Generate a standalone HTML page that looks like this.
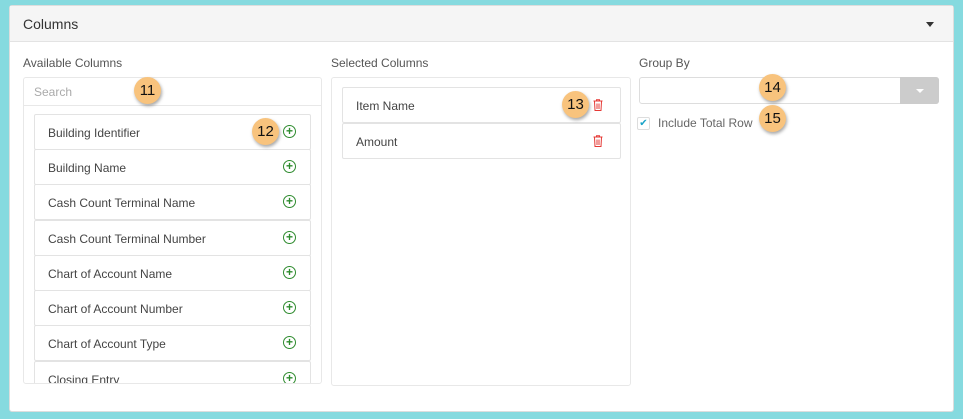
<!DOCTYPE html>
<html><head><style>
*{box-sizing:border-box;margin:0;padding:0}
body{width:963px;height:419px;background:#86dadf;font-family:"Liberation Sans",sans-serif;color:#444;position:relative;overflow:hidden}
.panel{position:absolute;left:9px;top:5px;width:945px;height:407px;background:#fff;border:1px solid #ddd;border-radius:3px}
.hdr{position:absolute;left:0;top:0;right:0;height:36px;background:#f5f5f5;border-bottom:1px solid #e3e3e3}
.hdr span{position:absolute;left:13px;top:10px;font-size:14px;color:#333}
.caret{position:absolute;right:19px;top:16px;border-left:4px solid transparent;border-right:4px solid transparent;border-top:5px solid #333}
.abs{position:absolute}
.lbl{font-size:12px;color:#555}
.box{border:1px solid #e8e8e8;border-radius:3px;background:#fff;overflow:hidden}
.item{position:absolute;left:10px;width:277px;height:36px;border:1px solid #e3e3e3;border-radius:2px;font-size:12px;color:#444;padding:11px 0 0 13px;background:#fff}
.plus{position:absolute;right:14px;top:10px;width:13px;height:13px;border:1px solid #2e8b2e;border-radius:50%;color:#2e8b2e;font-size:12px;line-height:10px;text-align:center;font-weight:bold}
.badge{position:absolute;width:27px;height:27px;border-radius:50%;background:#f8c37d;box-shadow:1px 2px 3px rgba(0,0,0,.35);font-size:15px;color:#111;text-align:center;line-height:27px}
.trash{position:absolute;right:17px;top:11px;width:10px;height:12px}
</style></head><body>
<div class="panel">
<div class="hdr"><span>Columns</span><div class="caret"></div></div>
</div>
<div class="abs lbl" style="left:23px;top:56px">Available Columns</div>
<div class="abs box" style="left:23px;top:77px;width:299px;height:307px">
 <div style="height:28px;border-bottom:1px solid #e8e8e8;font-size:12px;color:#aaa;padding:7px 0 0 10px">Search</div>
 <div class="item" style="top:36px">Building Identifier<div class="plus">+</div></div>
 <div class="item" style="top:71px">Building Name<div class="plus">+</div></div>
 <div class="item" style="top:106px">Cash Count Terminal Name<div class="plus">+</div></div>
 <div class="item" style="top:142px">Cash Count Terminal Number<div class="plus">+</div></div>
 <div class="item" style="top:177px">Chart of Account Name<div class="plus">+</div></div>
 <div class="item" style="top:212px">Chart of Account Number<div class="plus">+</div></div>
 <div class="item" style="top:247px">Chart of Account Type<div class="plus">+</div></div>
 <div class="item" style="top:283px">Closing Entry<div class="plus">+</div></div>
</div>
<div class="abs lbl" style="left:331px;top:56px">Selected Columns</div>
<div class="abs box" style="left:331px;top:77px;width:300px;height:309px">
 <div class="item" style="top:9px;width:279px">Item Name<svg class="trash" viewBox="0 0 10 12"><path d="M0.5 2H9.5M3.5 2V0.8H6.5V2M1.5 2.5L2 11.5H8L8.5 2.5M4 4.5V10M6 4.5V10" stroke="#e53935" fill="none" stroke-width="1"/></svg></div>
 <div class="item" style="top:45px;width:279px">Amount<svg class="trash" viewBox="0 0 10 12"><path d="M0.5 2H9.5M3.5 2V0.8H6.5V2M1.5 2.5L2 11.5H8L8.5 2.5M4 4.5V10M6 4.5V10" stroke="#e53935" fill="none" stroke-width="1"/></svg></div>
</div>
<div class="abs lbl" style="left:639px;top:56px">Group By</div>
<div class="abs" style="left:639px;top:77px;width:300px;height:27px;border:1px solid #ddd;border-radius:3px;background:#fff"></div>
<div class="abs" style="left:900px;top:77px;width:39px;height:27px;background:#ccc;border-radius:0 3px 3px 0"></div>
<div class="abs" style="left:916px;top:89px;border-left:4px solid transparent;border-right:4px solid transparent;border-top:4px solid #fff"></div>
<div class="abs" style="left:637px;top:117px;width:13px;height:13px;border:1px solid #ddd;border-radius:2px;color:#1aa3c8;font-size:10px;text-align:center;line-height:11px">✔</div>
<div class="abs lbl" style="left:658px;top:116px;color:#666">Include Total Row</div>
<div class="badge" style="left:134px;top:77px">11</div>
<div class="badge" style="left:252px;top:118px">12</div>
<div class="badge" style="left:562px;top:91px">13</div>
<div class="badge" style="left:759px;top:74px">14</div>
<div class="badge" style="left:759px;top:105px">15</div>
</body></html>
